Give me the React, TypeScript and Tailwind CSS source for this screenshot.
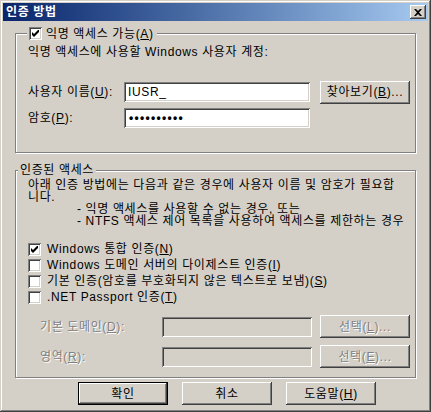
const raised =
  "shadow-[inset_-1px_-1px_#404040,inset_1px_1px_#fff,inset_-2px_-2px_#808080,inset_2px_2px_#d4d0c8]";
const sunken =
  "shadow-[inset_1px_1px_#808080,inset_-1px_-1px_#fff,inset_2px_2px_#404040,inset_-2px_-2px_#d4d0c8]";
const etched = "border border-[#808080] shadow-[1px_1px_0_#fff,inset_1px_1px_0_#fff]";
const disabledText = "text-[#808080] [text-shadow:1px_1px_0_#fff]";

function Check({ checked }: { checked?: boolean }) {
  return (
    <span className={`w-[13px] h-[13px] shrink-0 bg-white flex ${sunken}`}>
      {checked && (
        <svg width="13" height="13" viewBox="0 0 13 13">
          <polygon points="3,5 5,7 9,3 10,3 10,5 5,10 3,8" fill="#000" />
        </svg>
      )}
    </span>
  );
}

function Button({
  children,
  width = 90,
  isDefault,
  disabled,
}: {
  children: React.ReactNode;
  width?: number;
  isDefault?: boolean;
  disabled?: boolean;
}) {
  return (
    <div
      className={`h-[23px] shrink-0 flex items-center justify-center leading-[12px] ${raised} ${
        isDefault ? "border border-black" : ""
      } ${disabled ? disabledText : ""}`}
      style={{ width }}
    >
      {children}
    </div>
  );
}

function Field({ width, disabled, children }: { width: number; disabled?: boolean; children?: React.ReactNode }) {
  return (
    <div
      className={`h-[20px] shrink-0 flex items-center pl-[4px] leading-[12px] ${sunken} ${
        disabled ? "bg-[#d4d0c8]" : "bg-white"
      }`}
      style={{ width }}
    >
      {children}
    </div>
  );
}

export default function App() {
  return (
    <div className="w-[431px] h-[412px] bg-[#d4d0c8] p-[3px] flex flex-col text-[12px] tracking-[0.64px] text-black font-['Liberation_Sans','Noto_Sans_CJK_KR',sans-serif] shadow-[inset_-1px_-1px_#404040,inset_1px_1px_#d4d0c8,inset_-2px_-2px_#808080,inset_2px_2px_#fff]">
      {/* Title bar */}
      <div className="h-[18px] flex items-center justify-between pl-[3px] pr-[2px] bg-linear-to-r from-[#0a246a] to-[#a6caf0]">
        <span className="text-white font-bold leading-[12px]">인증 방법</span>
        <div className={`w-[16px] h-[14px] bg-[#d4d0c8] flex items-center justify-center ${raised}`}>
          <svg width="8" height="7" viewBox="0 0 8 7">
            <path d="M0 0h2l2 2 2-2h2L5 3.5 8 7H6L4 5 2 7H0l3-3.5z" fill="#000" />
          </svg>
        </div>
      </div>

      <div className="flex flex-col px-[12px]">
        {/* Anonymous access */}
        <div className={`relative mt-[12px] h-[120px] pt-[11px] pl-[12px] ${etched}`}>
          <div className="absolute left-[11px] top-[-7px] flex items-center gap-[4px] bg-[#d4d0c8] pl-[2px] pr-[3px] leading-[12px]">
            <Check checked />
            <span>
              익명 액세스 가능(<u>A</u>)
            </span>
          </div>
          <div className="leading-[14px] whitespace-nowrap">익명 액세스에 사용할 Windows 사용자 계정:</div>
          <div className="mt-[21px] h-[24px] flex items-center">
            <span className="w-[96px] shrink-0">
              사용자 이름(<u>U</u>):
            </span>
            <Field width={186}>IUSR_</Field>
            <div className="ml-[10px]">
              <Button>
                찾아보기(<u>B</u>)...
              </Button>
            </div>
          </div>
          <div className="mt-[4px] h-[20px] flex items-center">
            <span className="w-[96px] shrink-0">
              암호(<u>P</u>):
            </span>
            <Field width={186}>
              <span className="font-bold tracking-[1.3px] text-[12px] pl-[1px]">••••••••••</span>
            </Field>
          </div>
        </div>

        {/* Authenticated access */}
        <div className={`relative mt-[17px] h-[208px] pt-[8px] pl-[12px] ${etched}`}>
          <div className="absolute left-[2px] top-[-7px] bg-[#d4d0c8] px-[2px] leading-[12px]">인증된 액세스</div>
          <div className="leading-[12px] whitespace-nowrap">
            <div>아래 인증 방법에는 다음과 같은 경우에 사용자 이름 및 암호가 필요합</div>
            <div>니다.</div>
            <div className="pl-[49px]">- 익명 액세스를 사용할 수 없는 경우, 또는</div>
            <div className="pl-[49px]">- NTFS 액세스 제어 목록을 사용하여 액세스를 제한하는 경우</div>
          </div>

          <div className="mt-[14px] flex flex-col">
            <div className="h-[16px] flex items-center gap-[6px]">
              <Check checked />
              <span>
                Windows 통합 인증(<u>N</u>)
              </span>
            </div>
            <div className="h-[16px] flex items-center gap-[6px]">
              <Check />
              <span>
                Windows 도메인 서버의 다이제스트 인증(<u>I</u>)
              </span>
            </div>
            <div className="h-[16px] flex items-center gap-[6px]">
              <Check />
              <span>
                기본 인증(암호를 부호화되지 않은 텍스트로 보냄)(<u>S</u>)
              </span>
            </div>
            <div className="h-[16px] flex items-center gap-[6px]">
              <Check />
              <span>
                .NET Passport 인증(<u>T</u>)
              </span>
            </div>
          </div>

          <div className="mt-[10px] h-[23px] pl-[12px] flex items-center">
            <span className={`w-[122px] shrink-0 ${disabledText}`}>
              기본 도메인(<u>D</u>):
            </span>
            <Field width={150} disabled />
            <div className="ml-[8px]">
              <Button disabled>
                선택(<u>L</u>)...
              </Button>
            </div>
          </div>
          <div className="mt-[7px] h-[23px] pl-[12px] flex items-center">
            <span className={`w-[122px] shrink-0 ${disabledText}`}>
              영역(<u>R</u>):
            </span>
            <Field width={150} disabled />
            <div className="ml-[8px]">
              <Button disabled>
                선택(<u>E</u>)...
              </Button>
            </div>
          </div>
        </div>

        {/* Dialog buttons */}
        <div className="mt-[4px] pl-[63px] flex gap-[14px]">
          <Button isDefault>확인</Button>
          <Button>취소</Button>
          <Button>
            도움말(<u>H</u>)
          </Button>
        </div>
      </div>
    </div>
  );
}
